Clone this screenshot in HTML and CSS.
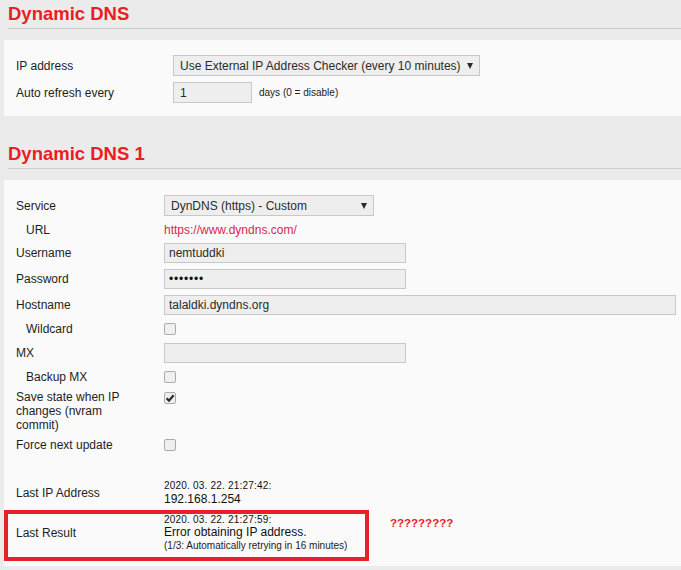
FILE: index.html
```html
<!DOCTYPE html>
<html>
<head>
<meta charset="utf-8">
<link rel="stylesheet" href="styles.css">
</head>
<body>
<h2 class="title">Dynamic DNS</h2>
<div class="panel p1">
  <div class="row r-ctl">
    <div class="lbl">IP address</div>
    <div class="val"><div class="select s1"><span>Use External IP Address Checker (every 10 minutes)</span><i class="arrow"></i></div></div>
  </div>
  <div class="row r-ctl">
    <div class="lbl">Auto refresh every</div>
    <div class="val"><div class="input i-days">1</div><span class="note">days (0 = disable)</span></div>
  </div>
</div>

<h2 class="title t2">Dynamic DNS 1</h2>
<div class="panel p2">
  <div class="row r-ctl r-svc">
    <div class="lbl">Service</div>
    <div class="val"><div class="select s2"><span>DynDNS (https) - Custom</span><i class="arrow"></i></div></div>
  </div>
  <div class="row r-txt">
    <div class="lbl sub">URL</div>
    <div class="val"><span class="link">https://www.dyndns.com/</span></div>
  </div>
  <div class="row r-ctl">
    <div class="lbl">Username</div>
    <div class="val"><div class="input i-mid">nemtuddki</div></div>
  </div>
  <div class="row r-ctl">
    <div class="lbl">Password</div>
    <div class="val"><div class="input i-mid pw">&bull;&bull;&bull;&bull;&bull;&bull;&bull;</div></div>
  </div>
  <div class="row r-ctl">
    <div class="lbl">Hostname</div>
    <div class="val"><div class="input i-wide">talaldki.dyndns.org</div></div>
  </div>
  <div class="row r-cb">
    <div class="lbl sub">Wildcard</div>
    <div class="val"><span class="cb"></span></div>
  </div>
  <div class="row r-ctl">
    <div class="lbl">MX</div>
    <div class="val"><div class="input i-mid"></div></div>
  </div>
  <div class="row r-cb">
    <div class="lbl sub">Backup MX</div>
    <div class="val"><span class="cb"></span></div>
  </div>
  <div class="row r-multi">
    <div class="lbl">Save state when IP changes (nvram commit)</div>
    <div class="val"><span class="cb checked"><svg viewBox="0 0 12 12" width="12" height="12"><path d="M2.6 6.2 L5 8.6 L9.6 3.2" fill="none" stroke="#2b2b2b" stroke-width="2.2"/></svg></span></div>
  </div>
  <div class="row r-cb">
    <div class="lbl">Force next update</div>
    <div class="val"><span class="cb"></span></div>
  </div>
  <div class="spacer"></div>
  <div class="row r-status">
    <div class="lbl">Last IP Address</div>
    <div class="val">
      <div class="stamp">2020. 03. 22. 21:27:42:</div>
      <div class="main">192.168.1.254</div>
    </div>
  </div>
  <div class="result-line">
    <div class="result-box">
      <div class="lbl">Last Result</div>
      <div class="val">
        <div class="stamp">2020. 03. 22. 21:27:59:</div>
        <div class="main">Error obtaining IP address.</div>
        <div class="retry">(1/3: Automatically retrying in 16 minutes)</div>
      </div>
    </div>
    <div class="qq">?????????</div>
  </div>
</div>
</body>
</html>
```

FILE: styles.css
```css
html, body {
  margin: 0;
  padding: 0;
}
body {
  background: #ebebeb;
  font-family: "Liberation Sans", Arial, sans-serif;
  font-size: 12px;
  color: #1e1e1e;
  width: 681px;
  overflow: hidden;
}
.title {
  margin: 0 0 0 8px;
  padding: 3px 0 3px 0;
  line-height: 22px;
  font-size: 18.5px;
  font-weight: bold;
  color: #ec1c24;
  border-bottom: 1px solid #cdcdcd;
}
.t2 {
  margin-top: 24px;
}
.panel {
  margin: 11px 0 0 4px;
  background: #fafafa;
}
.p1 {
  padding: 12px 0 10px 12px;
}
.p1 .lbl {
  width: 157px;
}
.p2 {
  padding: 12px 0 5px 12px;
}
.p2 .lbl {
  width: 148px;
}
.row {
  display: flex;
  align-items: center;
}
.lbl {
  flex: none;
  line-height: 14px;
}
.lbl.sub {
  padding-left: 10px;
  box-sizing: border-box;
}
.val {
  display: flex;
  align-items: center;
}
.r-ctl {
  padding: 3px 0;
}
.r-txt {
  padding: 4px 0 3px 0;
  line-height: 14px;
}
.r-cb {
  padding: 3px 0;
  height: 16px;
}
.r-multi {
  align-items: flex-start;
  padding: 2px 0 2px 0;
}
.p2 .r-multi .lbl {
  width: 116px;
  margin-right: 32px;
}
.r-multi .cb {
  margin-top: 2px;
}
.select, .input {
  box-sizing: border-box;
  background: #eeeeee;
  border: 1px solid #c8c8c8;
  color: #2b2b2b;
  display: flex;
  align-items: center;
  white-space: nowrap;
}
.select {
  height: 21px;
  padding: 0 6px 0 6px;
  justify-content: space-between;
}
.s1 {
  width: 307px;
}
.s2 {
  width: 210px;
}
.arrow {
  width: 0;
  height: 0;
  border-left: 3.5px solid transparent;
  border-right: 3.5px solid transparent;
  border-top: 6px solid #2a2a2a;
  margin-top: 1px;
}
.input {
  height: 20px;
  padding: 0 4px;
}
.p1 .input {
  height: 21px;
  padding: 0 6px;
}
.i-days {
  width: 79px;
}
.i-mid {
  width: 242px;
}
.i-wide {
  width: 512px;
}
.pw {
  font-size: 12px;
  letter-spacing: 0.8px;
  color: #111;
}
.note {
  font-size: 10px;
  margin-left: 7px;
  color: #222;
}
.link {
  color: #dc1f4e;
}
.cb {
  box-sizing: border-box;
  display: block;
  width: 12px;
  height: 12px;
  background: #efefef;
  border: 1px solid #ababab;
  border-radius: 2px;
  position: relative;
}
.cb svg {
  position: absolute;
  left: -1px;
  top: -1px;
}
.spacer {
  height: 21px;
}
.r-status {
  padding: 3px 0;
}
.r-status .val {
  flex-direction: column;
  align-items: flex-start;
}
.stamp {
  font-size: 10px;
  line-height: 12px;
  letter-spacing: 0.2px;
  color: #111;
}
.main {
  line-height: 14px;
  color: #111;
}
.result-line {
  display: flex;
  align-items: flex-start;
  margin: 1px 0 0 -12px;
}
.result-box {
  box-sizing: border-box;
  width: 365px;
  border: 4px solid #e8202a;
  padding: 0 0 4px 8px;
  display: flex;
  align-items: center;
}
.result-box .lbl {
  width: 148px;
  padding-bottom: 1px;
}
.result-box .val {
  flex-direction: column;
  align-items: flex-start;
}
.result-box .stamp {
  line-height: 11px;
}
.retry {
  font-size: 10px;
  line-height: 14px;
  color: #222;
}
.qq {
  margin: 6px 0 0 21px;
  font-size: 11.5px;
  font-weight: bold;
  color: #ec1c24;
  line-height: 14px;
}
```
